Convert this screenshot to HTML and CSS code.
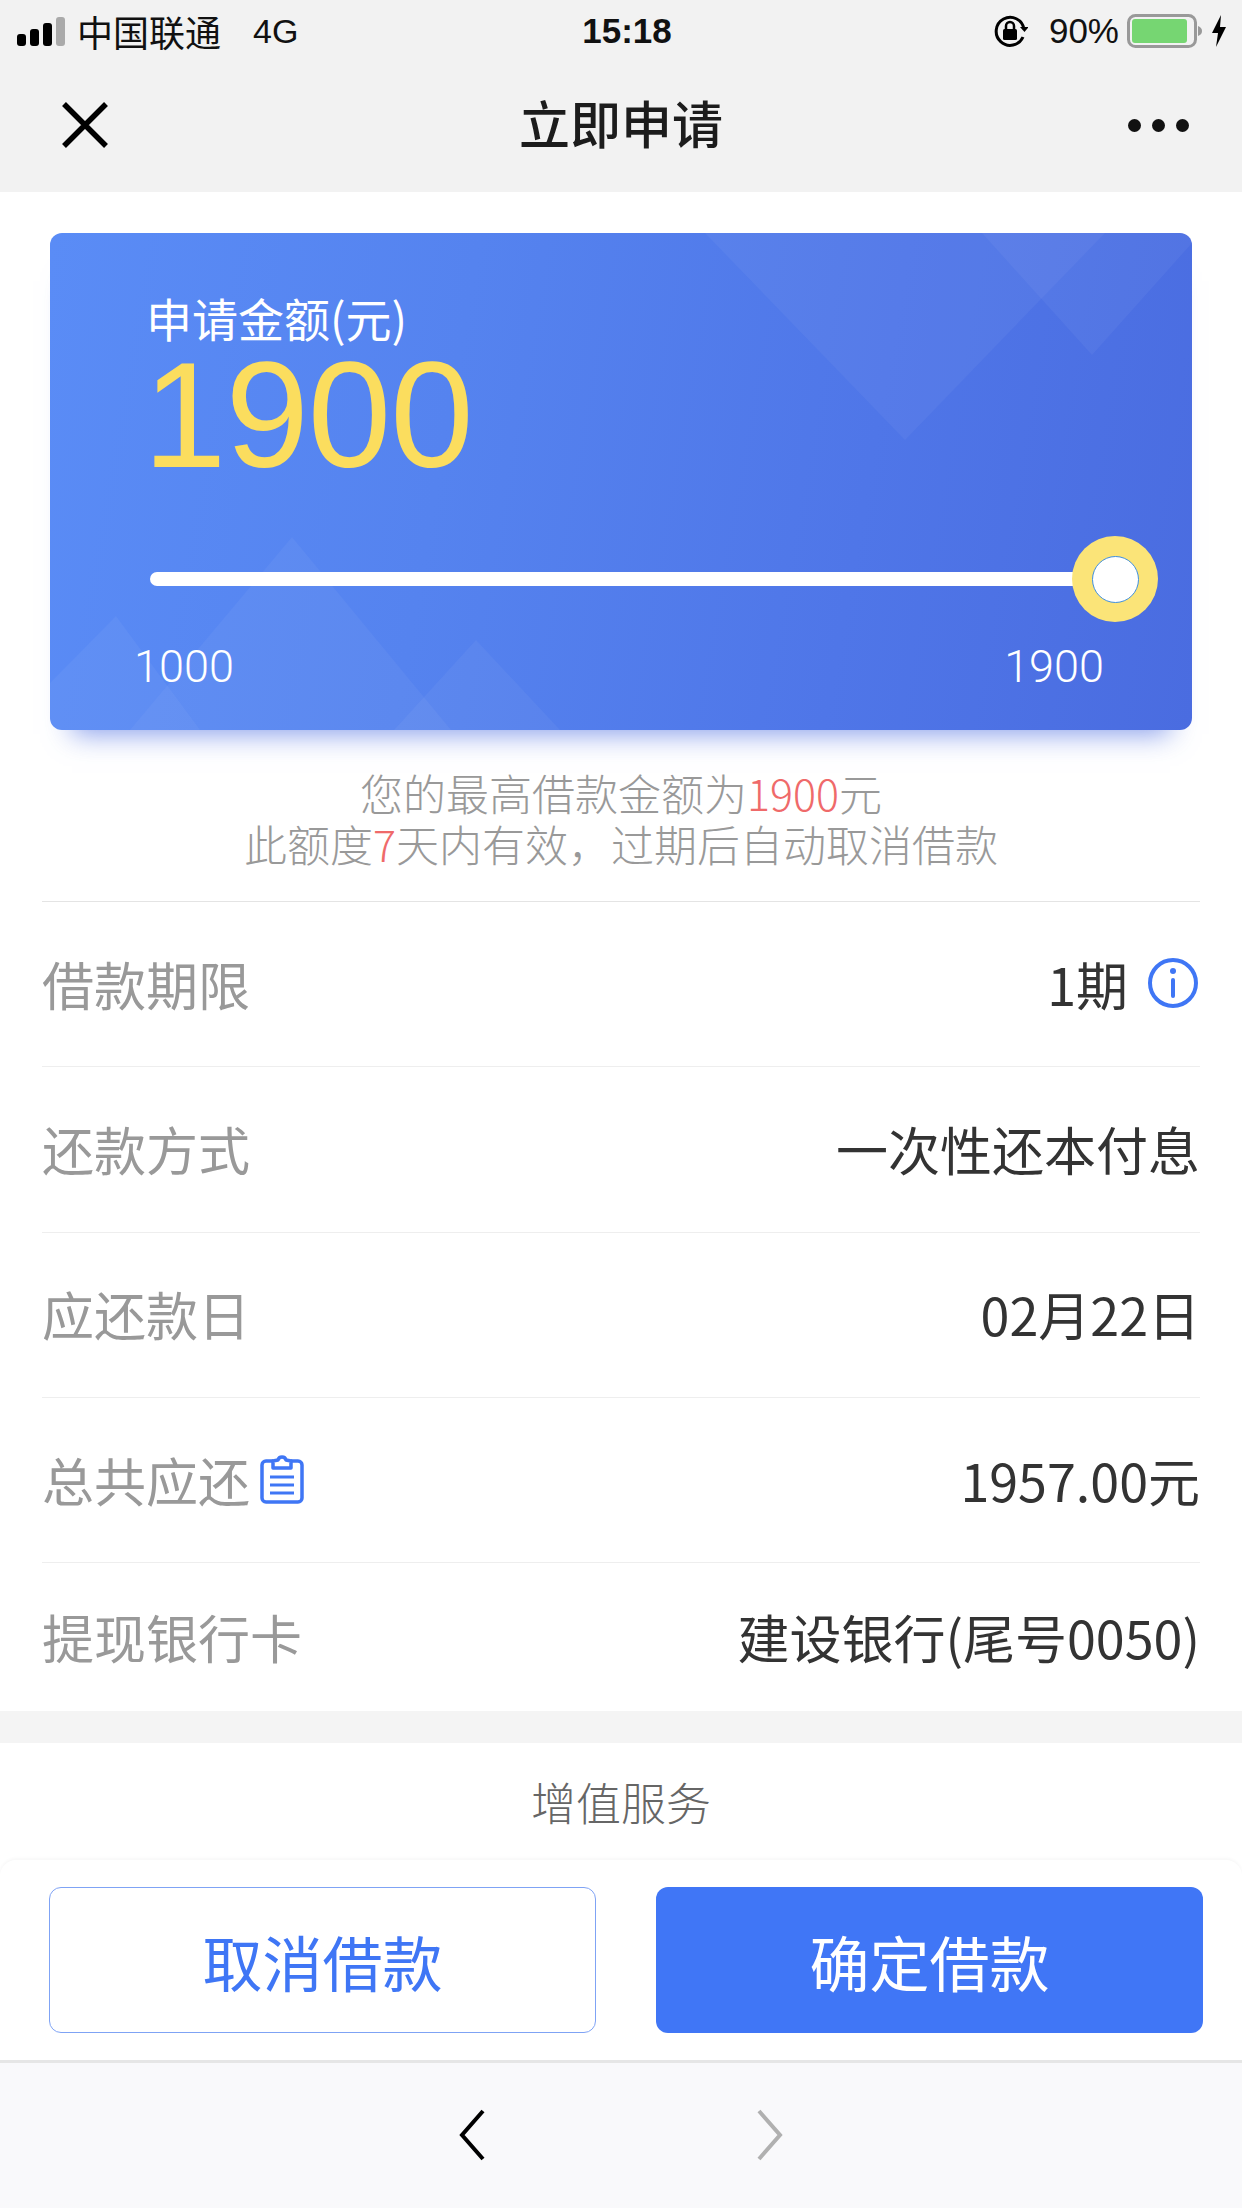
FILE: index.html
```html
<!DOCTYPE html>
<html lang="zh-CN">
<head>
<meta charset="utf-8">
<title>立即申请</title>
<link rel="stylesheet" href="styles.css">
</head>
<body>
<div class="page">
  <header class="top">
    <div class="status">
      <div class="status-left">
        <svg class="signal" width="48" height="30" viewBox="0 0 48 30"><rect x="0" y="18" width="9" height="12" rx="3" fill="#000"/><rect x="13" y="13" width="9" height="17" rx="3" fill="#000"/><rect x="26" y="7" width="9" height="23" rx="3" fill="#000"/><rect x="39" y="1" width="9" height="29" rx="3" fill="#aaa"/></svg>
        <span class="carrier">中国联通</span>
        <span class="net">4G</span>
      </div>
      <div class="status-time">15:18</div>
      <div class="status-right">
        <svg class="lock" width="35" height="32" viewBox="0 0 35 32"><path d="M30 22A14 14 0 1 1 31 14" fill="none" stroke="#000" stroke-width="3"/><path d="M27 12l4.500 5 4-5z" fill="#000"/><rect x="10" y="14" width="14" height="11" rx="1.500" fill="#000"/><path d="M13 14v-3a4 4 0 0 1 8 0v3" fill="none" stroke="#000" stroke-width="2.500"/></svg>
        <span class="pct">90%</span>
        <svg class="battery" width="76" height="34" viewBox="0 0 76 34"><rect x="1.500" y="1.500" width="67" height="31" rx="7" fill="none" stroke="#999" stroke-width="3"/><rect x="5" y="5" width="55" height="24" rx="3" fill="#76d672"/><path d="M71 12c3 1 4 3 4 5s-1 4-4 5z" fill="#999"/></svg>
        <svg class="bolt" width="16" height="32" viewBox="0 0 16 32"><path d="M10 0L1 18h6l-2 14 10-20H9z" fill="#000"/></svg>
      </div>
    </div>
    <nav class="nav">
      <svg class="close" width="46" height="46" viewBox="0 0 46 46"><path d="M2 2l42 42M44 2L2 44" stroke="#000" stroke-width="5.500" fill="none"/></svg>
      <h1 class="nav-title">立即申请</h1>
      <div class="more"><i></i><i></i><i></i></div>
    </nav>
  </header>

  <main class="content">
    <section class="card">
      <svg class="card-bg" width="1142" height="497" viewBox="0 0 1142 497">
        <g fill="#fff" fill-opacity=".045">
          <path d="M655 0L855 207L1055 0z"/>
          <path d="M932 0L1042 122L1142 10V0z"/>
          <path d="M242 304L401 497H80z"/>
          <path d="M66 383L150 497H0V450z"/>
          <path d="M426 407L510 497H344z"/>
        </g>
      </svg>
      <div class="card-label">申请金额(元)</div>
      <div class="card-amount">1900</div>
      <div class="slider"><div class="knob"></div></div>
      <div class="range"><span>1000</span><span>1900</span></div>
    </section>

    <p class="hint">您的最高借款金额为<em>1900</em>元<br>此额度<em>7</em>天内有效，过期后自动取消借款</p>

    <ul class="rows">
      <li class="row"><span class="row-label">借款期限</span><span class="row-value">1期<svg class="info" width="50" height="50" viewBox="0 0 50 50"><circle cx="25" cy="25" r="23" fill="none" stroke="#3f76f5" stroke-width="4"/><circle cx="25" cy="13" r="3" fill="#3f76f5"/><path d="M25 22v16" stroke="#3f76f5" stroke-width="4" stroke-linecap="round"/></svg></span></li>
      <li class="row"><span class="row-label">还款方式</span><span class="row-value">一次性还本付息</span></li>
      <li class="row"><span class="row-label">应还款日</span><span class="row-value">02月22日</span></li>
      <li class="row"><span class="row-label">总共应还<svg class="clip" width="44" height="50" viewBox="0 0 44 50"><path d="M13 7H6a4 4 0 0 0-4 4v33a4 4 0 0 0 4 4h32a4 4 0 0 0 4-4V11a4 4 0 0 0-4-4h-7" fill="none" stroke="#3f76f5" stroke-width="3.500"/><path d="M13 14V7l5-1c1-4 7-4 8 0l5 1v7z" fill="none" stroke="#3f76f5" stroke-width="3.500" stroke-linejoin="round"/><path d="M10 23h24M10 31h24M10 39h24" stroke="#3f76f5" stroke-width="3"/></svg></span><span class="row-value">1957.00元</span></li>
      <li class="row row-last"><span class="row-label">提现银行卡</span><span class="row-value">建设银行(尾号0050)</span></li>
    </ul>

    <div class="band"></div>
    <div class="service">增值服务</div>
  </main>

  <div class="actions">
    <button class="btn btn-ghost">取消借款</button>
    <button class="btn btn-primary">确定借款</button>
  </div>

  <footer class="toolbar">
    <svg width="26" height="52" viewBox="0 0 26 52"><path d="M24 2L3 26l21 24" fill="none" stroke="#000" stroke-width="4"/></svg>
    <svg width="26" height="52" viewBox="0 0 26 52"><path d="M2 2l21 24L2 50" fill="none" stroke="#b0b0b0" stroke-width="4"/></svg>
  </footer>
</div>
</body>
</html>
```
FILE: styles.css
```css
* { box-sizing: border-box; }
html, body { margin: 0; padding: 0; background: #fff; }
body { font-family: "Noto Sans CJK SC", "Noto Sans", sans-serif; }
.page { width: 1242px; height: 2208px; display: flex; flex-direction: column; overflow: hidden; }

.top { background: #f2f2f2; height: 192px; flex: none; }
.status { height: 62px; display: grid; grid-template-columns: 1fr auto 1fr; align-items: center; color: #111; font-size: 36px; padding: 0 15px 0 17px; }
.status-left { display: flex; align-items: center; }
.status-right { display: flex; align-items: center; justify-content: flex-end; }
.signal { margin-right: 12px; }
.net { margin-left: 32px; font-family: "Liberation Sans", sans-serif; font-size: 34px; }
.status-time { font-family: "Liberation Sans", sans-serif; font-weight: 700; font-size: 35px; margin-left: 10px; }
.pct { font-family: "Liberation Sans", sans-serif; font-size: 35px; margin: 0 8px 0 21px; }
.bolt { margin-left: 8px; }

.nav { height: 130px; display: flex; align-items: center; justify-content: space-between; padding: 0 53px 4px 62px; position: relative; }
.nav-title { margin: 0; font-size: 51px; font-weight: 500; color: #1c1c1c; position: absolute; left: 0; right: 0; text-align: center; line-height: 1; top: 35px; }
.more { display: flex; gap: 11px; }
.more i { width: 13px; height: 13px; border-radius: 50%; background: #111; }

.content { flex: 1; display: flex; flex-direction: column; }
.card { margin: 41px 50px 0; height: 497px; border-radius: 12px; position: relative; padding: 56px 0 0 96px; color: #fff; background: linear-gradient(100deg, #5a8cf6 0%, #5583ef 35%, #4f76e8 70%, #4a6ce0 100%); box-shadow: 0 26px 26px -22px rgba(70, 105, 225, .65); }
.card-bg { position: absolute; left: 0; top: 0; border-radius: 12px; }
.card-label { position: relative; font-size: 46px; line-height: 56px; }
.card-amount { position: relative; font-family: "Liberation Sans", sans-serif; font-size: 150px; line-height: 150px; color: #fbdd5e; margin-top: -5px; margin-left: -3px; letter-spacing: -1px; }
.slider { position: relative; width: 925px; height: 14px; margin: 82px 0 0 4px; background: #fff; border-radius: 7px 0 0 7px; }
.knob { position: absolute; right: -83px; top: -36px; width: 86px; height: 86px; border-radius: 50%; background: #fbe478; display: flex; align-items: center; justify-content: center; }
.knob::after { content: ""; width: 45px; height: 45px; border-radius: 50%; background: #fff; border: 1px solid #3f8fe0; }
.range { position: relative; display: flex; justify-content: space-between; width: 970px; margin: 53px 0 0 -12px; font-family: Roboto, sans-serif; font-weight: 300; font-size: 45px; line-height: 56px; }

.hint { margin: 37px 0 0; text-align: center; font-size: 43px; line-height: 51px; color: #999; font-weight: 300; height: 134px; }
.hint em { font-style: normal; color: #ef6a6a; }

.rows { list-style: none; margin: 0 42px; padding: 0; }
.row { height: 165.3px; display: flex; align-items: center; justify-content: space-between; border-top: 1px solid #eee; font-size: 52px; padding-bottom: 2px; }
.row:first-child { border-top-color: #e4e4e4; }
.row-last { height: 149px; }
.row-label { color: #999; display: flex; align-items: center; }
.row-value { color: #333; display: flex; align-items: center; }
.info { margin-left: 20px; margin-right: 2px; }
.clip { margin-left: 10px; }

.band { height: 32px; background: #f4f4f4; flex: none; }
.service { height: 116px; display: flex; align-items: center; justify-content: center; font-size: 45px; color: #666; font-weight: 300; }

.actions { flex: none; height: 200px; margin-top: -2px; display: grid; grid-template-columns: 547px 547px; justify-content: space-between; padding: 27px 39px 0 49px; background: #fff; border-radius: 16px 16px 0 0; box-shadow: 0 -2px 3px rgba(0, 0, 0, .03); align-items: start; }
.btn { height: 146px; font: inherit; font-size: 60px; border-radius: 12px; padding: 0; }
.btn-ghost { background: #fff; color: #3f76f5; border: 1px solid #7fa3f5; }
.btn-primary { background: #4076f6; color: #fff; border: 0; }

.toolbar { flex: none; height: 148px; background: #f9f9fb; border-top: 3px solid #e6e6e6; display: flex; align-items: flex-start; justify-content: center; gap: 272px; padding-top: 46px; padding-right: 1px; }
```
